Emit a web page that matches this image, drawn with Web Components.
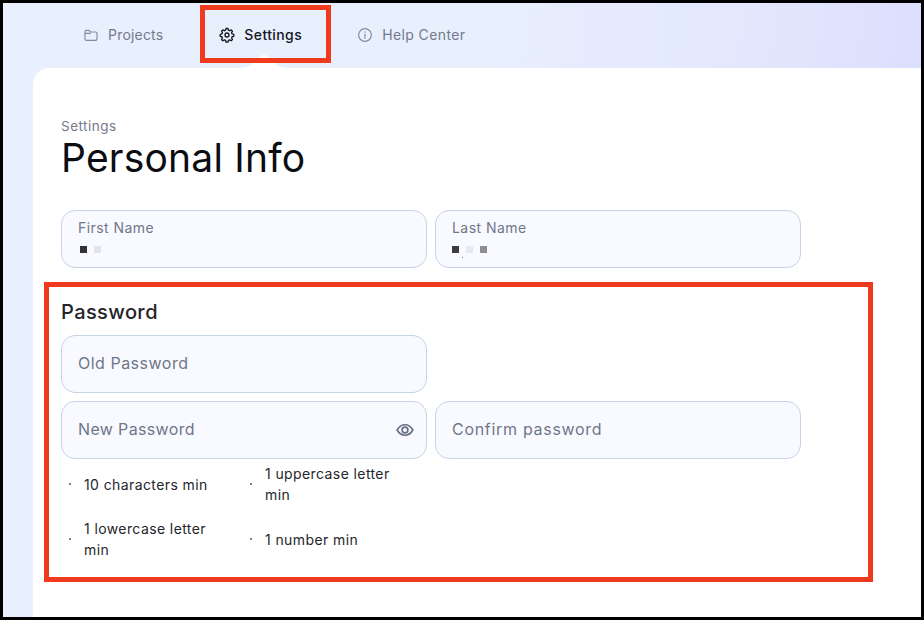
<!doctype html>
<html>
<head>
<meta charset="utf-8">
<title>Personal Info</title>
<style>
  html,body{margin:0;height:100%;background:#000;}
  body{font-family:Inter,"Noto Sans",sans-serif;}
</style>
</head>
<body>
<app-frame>
  <nav-tab slot="nav" icon="folder" label="Projects" style="--ls:.2px"></nav-tab>
  <nav-tab slot="nav" icon="gear" label="Settings" style="--ls:.4px" active></nav-tab>
  <nav-tab slot="nav" icon="info" label="Help Center" style="--ls:.4px;margin-left:-1px"></nav-tab>

  <page-title crumb="Settings" title="Personal Info"></page-title>

  <field-row>
    <text-field label="First Name" blobs="#333333,#e3e4e9"></text-field>
    <text-field label="Last Name" blobs="#3c3c3c,#e8e9ed,#8e8e90" speck style="--blob-x:-2px"></text-field>
  </field-row>

  <password-block>
    <field-row><text-field placeholder="Old Password"></text-field></field-row>
    <field-row>
      <text-field placeholder="New Password" eye style="--ls:.35px"></text-field>
      <text-field placeholder="Confirm password" style="--ls:.7px"></text-field>
    </field-row>
    <rule-list>
      <rule-item>10 characters min</rule-item>
      <rule-item>1 uppercase letter min</rule-item>
      <rule-item>1 lowercase letter min</rule-item>
      <rule-item>1 number min</rule-item>
    </rule-list>
  </password-block>

  <mark-box slot="marks" style="left:197px;top:2px;width:131px;height:58px"></mark-box>
  <mark-box slot="marks" style="left:41px;top:279px;width:829px;height:300px"></mark-box>
</app-frame>

<script>
// small stroke icons, 24 box
const IC = {
  folder:'<path d="M3 7a2 2 0 0 1 2-2h4l2 2.500h8a2 2 0 0 1 2 2V18a2 2 0 0 1-2 2H5a2 2 0 0 1-2-2z"/><path d="M3 9.500h8"/>',
  gear:'<circle cx="12" cy="12" r="3"/><path d="M10.500 2.300h3l.6 2.500 1.900.8 2.200-1.300 2 2-1.300 2.200.8 1.900 2.500.6v3l-2.500.6-.8 1.900 1.300 2.200-2 2-2.200-1.300-1.900.8-.6 2.500h-3l-.6-2.500-1.900-.8-2.200 1.300-2-2 1.300-2.200-.8-1.900-2.500-.6v-3l2.500-.6.800-1.900-1.300-2.200 2-2 2.200 1.300 1.900-.8z"/>',
  info:'<circle cx="12" cy="12" r="9.500"/><path d="M12 11v6"/><path d="M12 7.300v.4"/>',
  eye:'<path d="M1.500 12C4 7.500 7.700 5 12 5s8 2.500 10.500 7c-2.500 4.500-6.200 7-10.500 7S4 16.500 1.500 12z"/><circle cx="12" cy="12" r="3.800"/>'
};

class AppFrame extends HTMLElement {
  connectedCallback() {
    const root = this.attachShadow({mode:'open'});
    root.innerHTML = `<style>
      :host{display:block;position:relative;box-sizing:border-box;width:924px;height:620px;padding:3px;background:#000;overflow:hidden;}
      .in{position:relative;height:100%;display:flex;flex-direction:column;background:linear-gradient(96deg,#e9f0fd 0%,#e9f0fd 45%,#e3e8fd 75%,#d9dcfd 100%);overflow:hidden;}
      .nav{flex:none;height:65px;display:flex;align-items:flex-start;gap:56px;padding:24px 0 0 80px;box-sizing:border-box;}
      .bump{position:absolute;left:236px;top:51px;}
      .card{flex:1;margin-left:30px;background:#fff;border-top-left-radius:16px;padding:50px 0 0 28px;display:flex;flex-direction:column;min-height:0;}
    </style>
    <div class="in">
      <div class="nav"><slot name="nav"></slot></div>
      <svg class="bump" width="50" height="14" viewBox="0 0 50 14"><path d="M0 14C8 14 13 11 17 7L22 2Q25 0 28 2L33 7C37 11 42 14 50 14Z" fill="#fff"/></svg>
      <div class="card"><slot></slot></div>
      <slot name="marks"></slot>
    </div>`;
  }
}

class NavTab extends HTMLElement {
  connectedCallback() {
    const on = this.hasAttribute('active');
    const root = this.attachShadow({mode:'open'});
    root.innerHTML = `<style>
      :host{display:flex;align-items:center;gap:9px;height:16px;font:${on?500:400} 14px/16px Inter,"Noto Sans",sans-serif;letter-spacing:var(--ls,.2px);color:${on?'#15171f':'#747a8c'};}
      svg{flex:none;}
    </style>
    <svg width="16" height="16" viewBox="0 0 24 24" fill="none" stroke="${on?'#15171f':'#858b9b'}" stroke-width="${on?2:1.700}" stroke-linecap="round" stroke-linejoin="round">${IC[this.getAttribute('icon')]}</svg>
    <span>${this.getAttribute('label')}</span>`;
  }
}

class PageTitle extends HTMLElement {
  connectedCallback() {
    const root = this.attachShadow({mode:'open'});
    root.innerHTML = `<style>
      :host{display:block;margin-bottom:29px;}
      .c{font:400 13.500px/16px Inter,"Noto Sans",sans-serif;letter-spacing:.5px;color:#747a8c;}
      h1{margin:1px 0 0;font:400 39px/46px Inter,"Noto Sans",sans-serif;letter-spacing:.2px;color:#0c0d12;}
    </style>
    <div class="c">${this.getAttribute('crumb')}</div>
    <h1>${this.getAttribute('title')}</h1>`;
  }
}

class FieldRow extends HTMLElement {
  connectedCallback() {
    this.attachShadow({mode:'open'}).innerHTML = `<style>
      :host{display:flex;gap:8px;}
    </style><slot></slot>`;
  }
}

class TextField extends HTMLElement {
  connectedCallback() {
    const blobs = this.getAttribute('blobs');
    const label = this.getAttribute('label');
    const ph = this.getAttribute('placeholder');
    const root = this.attachShadow({mode:'open'});
    root.innerHTML = `<style>
      :host{display:flex;box-sizing:border-box;width:366px;height:58px;background:#f9faff;border:1px solid #c6d2e8;border-radius:14px;padding:0 16px;font-family:Inter,"Noto Sans",sans-serif;color:#6f7689;position:relative;}
      .stack{display:flex;flex-direction:column;padding-top:8px;}
      .lab{font-size:14px;line-height:17px;letter-spacing:.45px;}
      .blobs{display:flex;gap:7px;margin:10px 0 0 calc(2px + var(--blob-x,0px));}
      .blobs i{width:7px;height:7px;display:block;}
      .speck{position:absolute;left:26px;top:46px;width:1px;height:1px;background:#777;}
      .ph{flex:1;align-self:center;font-size:16px;line-height:20px;letter-spacing:var(--ls,.5px);padding-bottom:2px;}
      svg{align-self:center;margin-right:-4px;}
    </style>
    ${blobs ? `<div class="stack"><div class="lab">${label}</div><div class="blobs">${blobs.split(',').map(c=>`<i style="background:${c}"></i>`).join('')}</div></div>` : `<div class="ph">${ph}</div>`}
    ${this.hasAttribute('speck') ? '<span class="speck"></span>' : ''}
    ${this.hasAttribute('eye') ? `<svg width="18" height="18" viewBox="0 0 24 24" fill="none" stroke="#697083" stroke-width="2.300" stroke-linejoin="round">${IC.eye}</svg>` : ''}`;
  }
}

class PasswordBlock extends HTMLElement {
  connectedCallback() {
    this.attachShadow({mode:'open'}).innerHTML = `<style>
      :host{display:flex;flex-direction:column;gap:8px;margin-top:32px;}
      h2{margin:0 0 3px;font:500 20px/24px Inter,"Noto Sans",sans-serif;letter-spacing:.4px;color:#24252b;}
    </style>
    <h2>Password</h2>
    <slot></slot>`;
  }
}

class RuleList extends HTMLElement {
  connectedCallback() {
    this.attachShadow({mode:'open'}).innerHTML = `<style>
      :host{display:grid;grid-template-columns:181px 150px;row-gap:13px;margin-left:8px;margin-top:-4px;align-items:center;}
    </style><slot></slot>`;
  }
}

class RuleItem extends HTMLElement {
  connectedCallback() {
    this.attachShadow({mode:'open'}).innerHTML = `<style>
      :host{display:flex;align-items:center;gap:13px;font:400 14px/21px Inter,"Noto Sans",sans-serif;letter-spacing:.4px;color:#25262c;}
      b{flex:none;width:2px;height:2px;border-radius:50%;background:#55575f;}
      .t{width:130px;}
    </style><b></b><span class="t"><slot></slot></span>`;
  }
}

class MarkBox extends HTMLElement {
  connectedCallback() {
    this.attachShadow({mode:'open'}).innerHTML = `<style>
      :host{position:absolute;box-sizing:border-box;border:5px solid #f03a1e;pointer-events:none;}
    </style>`;
  }
}

customElements.define('app-frame', AppFrame);
customElements.define('nav-tab', NavTab);
customElements.define('page-title', PageTitle);
customElements.define('field-row', FieldRow);
customElements.define('text-field', TextField);
customElements.define('password-block', PasswordBlock);
customElements.define('rule-list', RuleList);
customElements.define('rule-item', RuleItem);
customElements.define('mark-box', MarkBox);
</script>
</body>
</html>
